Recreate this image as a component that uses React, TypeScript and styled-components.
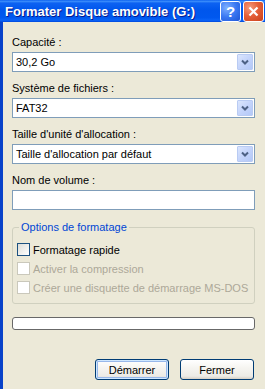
import styled, { createGlobalStyle } from "styled-components";

const GlobalStyle = createGlobalStyle`
  html, body {
    margin: 0;
    padding: 0;
    background: #ece9d8;
  }
  * {
    box-sizing: border-box;
  }
`;

const Window = styled.div`
  display: flex;
  flex-direction: column;
  width: 265px;
  height: 389px;
  overflow: hidden;
  font-family: "Liberation Sans", Arial, sans-serif;
  font-size: 11px;
  color: #000;
`;

const TitleBar = styled.div`
  display: flex;
  align-items: center;
  height: 22px;
  flex-shrink: 0;
  padding: 0 1px 0 5px;
  background: linear-gradient(
    #0a5fef 0%,
    #3b8dfb 6%,
    #0d62f2 14%,
    #0056ec 45%,
    #0058ef 80%,
    #0a63f7 92%,
    #0048dc 100%
  );
`;

const Title = styled.h1`
  flex: 1;
  margin: 0;
  font-family: "Liberation Sans", Arial, sans-serif;
  font-size: 13px;
  font-weight: bold;
  color: #fff;
  text-shadow: 1px 1px #0a1a8a;
  white-space: nowrap;
`;

const CaptionButtons = styled.div`
  display: flex;
  gap: 2px;
`;

const CaptionButton = styled.div<{ $close?: boolean }>`
  display: flex;
  align-items: center;
  justify-content: center;
  width: 21px;
  height: 21px;
  border: 1px solid #fff;
  border-radius: 3px;
  color: #fff;
  font-family: "Liberation Sans", Arial, sans-serif;
  font-size: 15px;
  font-weight: bold;
  background: ${(p) =>
    p.$close
      ? "radial-gradient(circle at 30% 30%, #f39b7d 0%, #e5603a 45%, #c8411b 100%)"
      : "radial-gradient(circle at 30% 30%, #7fb0ff 0%, #3a78f2 50%, #1d55d6 100%)"};
`;

const Frame = styled.div`
  flex: 1;
  display: flex;
  flex-direction: column;
  border-left: 3px solid #0842c9;
  background: #ece9d8;
  padding: 14px 10px 0 9px;
`;

const Field = styled.div`
  display: flex;
  flex-direction: column;
  gap: 3px;
  margin-bottom: 10px;
`;

const Label = styled.label`
  line-height: 13px;
  height: 13px;
`;

const Combo = styled.div`
  display: flex;
  align-items: center;
  height: 20px;
  padding: 0 1px 0 3px;
  border: 1px solid #7f9db9;
  background: #fff;
`;

const ComboText = styled.span`
  flex: 1;
`;

const DropButton = styled.div`
  display: flex;
  align-items: center;
  justify-content: center;
  width: 16px;
  height: 16px;
  border: 1px solid #b9cbf3;
  border-radius: 1px;
  background: linear-gradient(135deg, #dbe6fd 0%, #c4d4fb 50%, #b3c8f7 100%);
`;

const TextInput = styled.div`
  height: 20px;
  border: 1px solid #7f9db9;
  background: #fff;
`;

const Group = styled.fieldset`
  margin: 1px 0 0;
  padding: 9px 4px 9px;
  border: 1px solid #d0d0bf;
  border-radius: 3px;
  display: flex;
  flex-direction: column;
  gap: 6px;
`;

const Legend = styled.legend`
  margin-left: 2px;
  padding: 0 2px;
  line-height: 13px;
  color: #0046d5;
`;

const CheckRow = styled.div<{ $disabled?: boolean }>`
  display: flex;
  align-items: center;
  gap: 3px;
  height: 13px;
  color: ${(p) => (p.$disabled ? "#aca899" : "#000")};
`;

const Box = styled.span<{ $disabled?: boolean }>`
  width: 13px;
  height: 13px;
  border: 1px solid ${(p) => (p.$disabled ? "#cac8bb" : "#1c5180")};
  background: ${(p) =>
    p.$disabled ? "#fff" : "linear-gradient(135deg, #dcdcd7 0%, #f2f2ef 60%, #fff 100%)"};
`;

const Progress = styled.div`
  height: 13px;
  margin-top: 13px;
  border: 1px solid #686868;
  border-radius: 3px;
  background: #fff;
`;

const Buttons = styled.div`
  display: flex;
  justify-content: flex-end;
  gap: 11px;
  margin-top: 29px;
  padding-right: 1px;
`;

const Button = styled.button<{ $default?: boolean }>`
  width: 74px;
  height: 21px;
  padding: 0;
  border: 1px solid #003c74;
  border-radius: 3px;
  font-family: "Liberation Sans", Arial, sans-serif;
  font-size: 11px;
  color: #000;
  background: linear-gradient(#ffffff 0%, #f6f5f1 40%, #ecebe6 85%, #d6d0c5 100%);
  box-shadow: ${(p) =>
    p.$default ? "inset 0 0 0 1px #cee7ff, inset 0 0 0 2px #98b8ea" : "none"};
`;

function Chevron() {
  return (
    <svg width="8" height="6" viewBox="0 0 8 6">
      <path d="M1 1.5 L4 4.5 L7 1.5" fill="none" stroke="#4d6185" strokeWidth="2" />
    </svg>
  );
}

function Select({ value }: { value: string }) {
  return (
    <Combo>
      <ComboText>{value}</ComboText>
      <DropButton>
        <Chevron />
      </DropButton>
    </Combo>
  );
}

function FormatDialog() {
  return (
    <Window>
      <TitleBar>
        <Title>Formater Disque amovible (G:)</Title>
        <CaptionButtons>
          <CaptionButton>?</CaptionButton>
          <CaptionButton $close>
            <svg width="11" height="11" viewBox="0 0 11 11">
              <path d="M1.5 1.5 L9.5 9.5 M9.5 1.5 L1.5 9.5" stroke="#fff" strokeWidth="2.2" />
            </svg>
          </CaptionButton>
        </CaptionButtons>
      </TitleBar>
      <Frame>
        <Field>
          <Label>Capacité :</Label>
          <Select value="30,2 Go" />
        </Field>
        <Field>
          <Label>Système de fichiers :</Label>
          <Select value="FAT32" />
        </Field>
        <Field>
          <Label>Taille d'unité d'allocation :</Label>
          <Select value="Taille d'allocation par défaut" />
        </Field>
        <Field>
          <Label>Nom de volume :</Label>
          <TextInput />
        </Field>
        <Group>
          <Legend>Options de formatage</Legend>
          <CheckRow>
            <Box />
            Formatage rapide
          </CheckRow>
          <CheckRow $disabled>
            <Box $disabled />
            Activer la compression
          </CheckRow>
          <CheckRow $disabled>
            <Box $disabled />
            Créer une disquette de démarrage MS-DOS
          </CheckRow>
        </Group>
        <Progress />
        <Buttons>
          <Button $default>Démarrer</Button>
          <Button>Fermer</Button>
        </Buttons>
      </Frame>
    </Window>
  );
}

export default function App() {
  return (
    <>
      <GlobalStyle />
      <FormatDialog />
    </>
  );
}
